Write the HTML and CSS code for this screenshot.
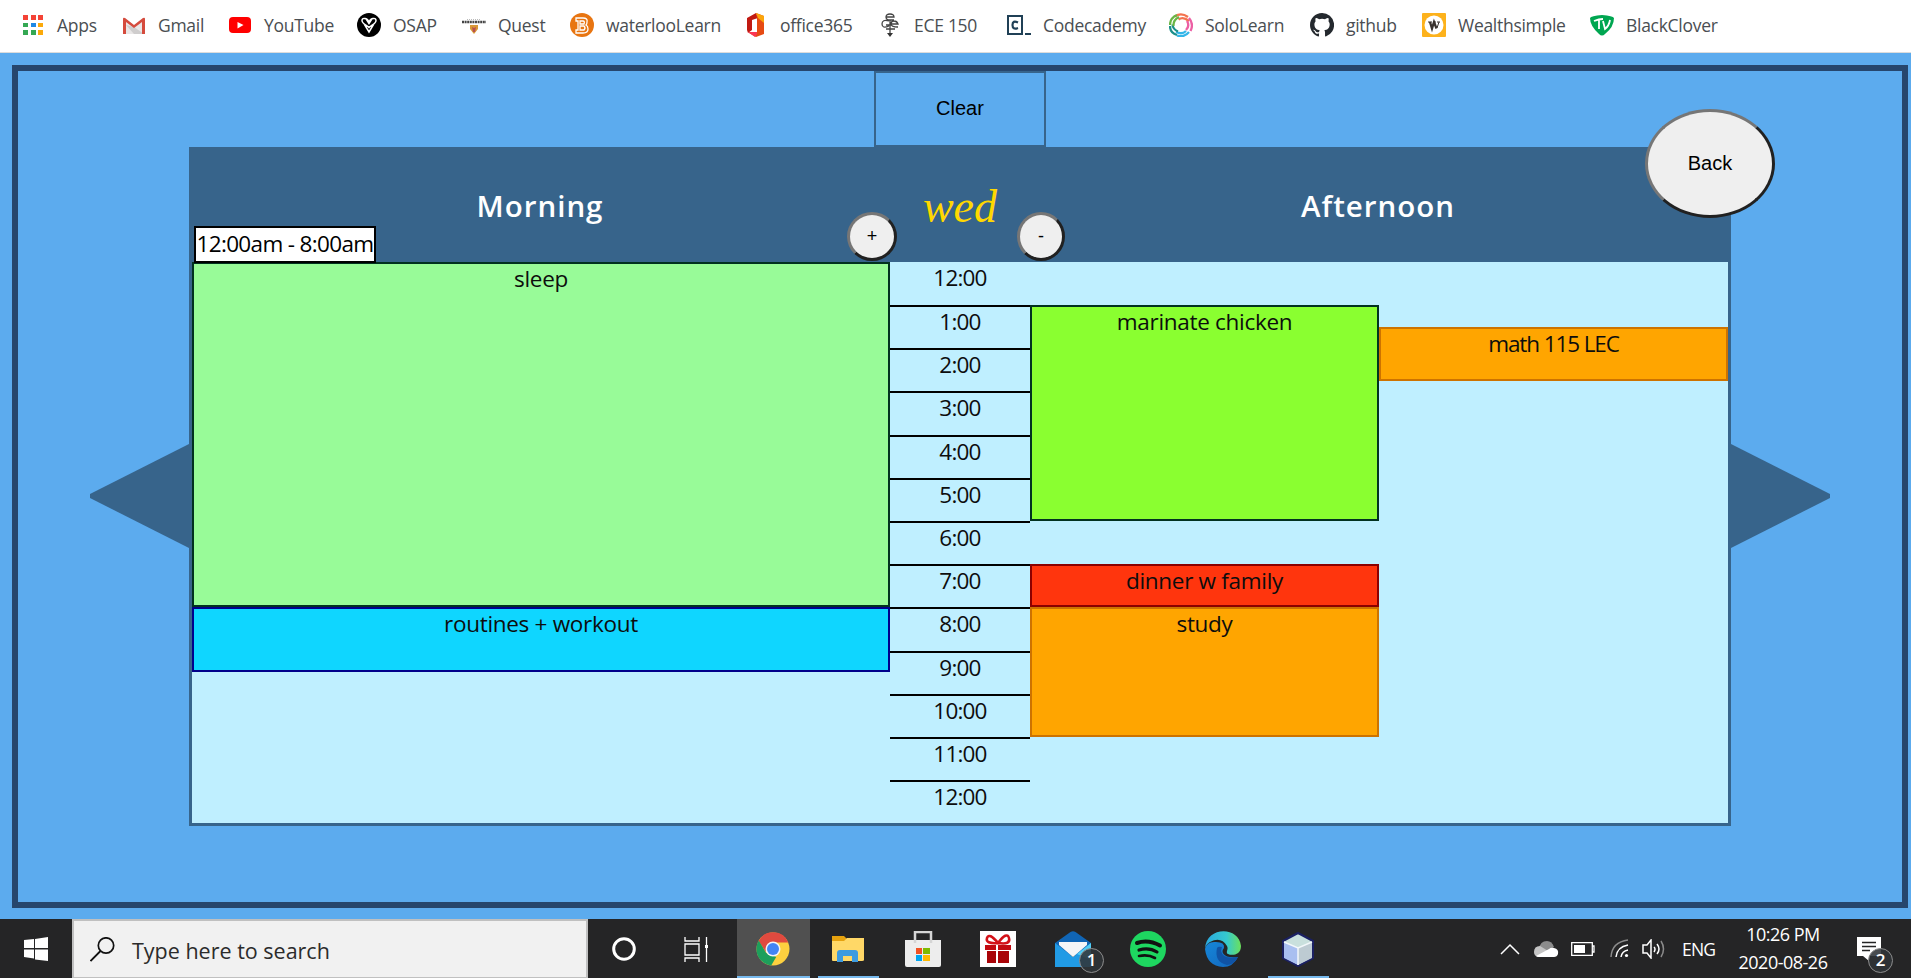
FILE: index.html
```html
<!DOCTYPE html>
<html lang="en">
<head>
<meta charset="utf-8">
<title>Day planner</title>
<link rel="stylesheet" href="styles.css">
</head>
<body>
<nav class="bookmarks">
  <a class="bm bm-apps"><svg viewBox="0 0 24 24"><path fill="#f44336" d="M2 2h5v5H2zM10 2h5v5h-5zM17 2h5v5h-5z"/><path fill="#34a853" d="M2 10h5v4H2zM2 17h5v5H2zM10 17h5v5h-5z"/><path fill="#1e88e5" d="M10 10h5v4h-5z"/><path fill="#fba90a" d="M17 10h5v4h-5zM17 17h5v5h-5z"/></svg><span>Apps</span></a>
  <a class="bm bm-gmail"><svg viewBox="0 0 24 24"><path fill="#e9e7e7" d="M1 5h22v16H1z"/><path fill="#cfcdcd" d="M12 14l10 7H12l-8-9z"/><path fill="#fff" d="M3 5h18l-9 7z"/><path fill="#d54b3d" d="M1 6q0-2 2-1l9 7 9-7q2-1 2 1v15h-3V9l-8 6-8-6v12H1z"/></svg><span>Gmail</span></a>
  <a class="bm bm-youtube"><svg viewBox="0 0 24 24"><rect x="1" y="4" width="22" height="16" rx="4" fill="#f00"/><path fill="#fff" d="M9.500 9l6 3-6 3.500z"/></svg><span>YouTube</span></a>
  <a class="bm bm-osap"><svg viewBox="0 0 24 24"><circle cx="12" cy="12" r="12"/><path fill="none" stroke="#fff" stroke-width="1.500" d="M12 9.500C11 5 5 4 5 7.500s5 4.500 7 7c2-2.500 7-3.500 7-7S13 5 12 9.500zM7.500 11.500L12 19l4.500-7.500M9.500 6.500l2.500 4 2.500-4"/></svg><span>OSAP</span></a>
  <a class="bm bm-quest"><svg viewBox="0 0 24 24"><path stroke="#bbb" stroke-width="1" stroke-dasharray="1 1" d="M5 6.500h14"/><path stroke="#444" stroke-width="2.600" stroke-dasharray="2 .6" d="M0 9h24"/><path fill="#d99736" d="M8 12h8v4l-4 5-4-5z"/><path fill="#b75050" d="M10 14l2 1 2-1-1 5h-2z"/></svg><span>Quest</span></a>
  <a class="bm bm-learn"><svg viewBox="0 0 24 24"><circle cx="12" cy="12" r="12" fill="#e87511"/><path fill="none" stroke="#fff" stroke-width="1.300" d="M6 5h7q5 0 4 4 0 2-1 3 2 1 2 4 0 4-5 4H6v-3h2V8H6zM10 8h3q2 0 1 3h-4zM10 13h4q2 2 0 4h-4z"/></svg><span>waterlooLearn</span></a>
  <a class="bm bm-office"><svg viewBox="0 0 24 24"><path fill="#c11a12" d="M3 5l9-5 2 5-6 2v10l-4 3-1-3z"/><path fill="#e64a13" d="M12 0l8 3v18l-8 3-7-4h8V5l-1-5z"/><path fill="#fba50b" d="M12 0l8 3v7l-6-5z"/><path fill="#fa3552" d="M4 19h9v2l-2 3z"/></svg><span>office365</span></a>
  <a class="bm bm-ece"><svg viewBox="0 0 24 24"><path fill="none" stroke="#444" stroke-width="1.300" d="M8 4h8q0-3-4-3T8 4t4 3h4M11 8q-7-2-7 3t7 2M13 11h7q-1-3-4-3t-3 3 7 3M8 16h9M12 7v15M8 12h5"/><path fill="#333" d="M9 20h6l-3 4z"/></svg><span>ECE 150</span></a>
  <a class="bm bm-code"><svg viewBox="0 0 24 24"><path fill="none" stroke="#204056" stroke-width="2" d="M1 3h14v18H1z"/><path fill="none" stroke="#204056" stroke-width="2.200" d="M11 9.500Q5.500 7 5.500 12t5.500 3"/><path stroke="#204056" stroke-width="2" d="M18 21h6"/></svg><span>Codecademy</span></a>
  <a class="bm bm-solo"><svg viewBox="0 0 24 24" fill="none" stroke-width="2.300"><path stroke="#f4734f" d="M6 3.500q6-4.500 13 .5M9.500 6.500Q14 3 20 8"/><path stroke="#ec5fa4" d="M20 5q5 6 1.500 13M18 8q3 5-1 9"/><path stroke="#34b5e8" d="M20 19q-5 6-12 3.500M17 18q-4 4-10 1"/><path stroke="#1b8f8a" d="M8 22q-7-2-7-9M9 18.500q-5-2-5.500-7"/><path stroke="#69b545" d="M1 12Q1 5 8 2M4.500 13q-.5-6 5.500-9"/></svg><span>SoloLearn</span></a>
  <a class="bm bm-github"><svg viewBox="0 0 16 16"><path fill="#24292e" d="M8 0C3.580 0 0 3.580 0 8c0 3.540 2.290 6.530 5.470 7.590.4.070.55-.17.55-.38v-1.490c-2.010.37-2.530-.49-2.690-.94-.09-.23-.48-.94-.82-1.130-.28-.15-.68-.52-.01-.53.63-.01 1.080.58 1.230.82.72 1.210 1.870.87 2.330.66.070-.52.280-.87.510-1.070-1.780-.2-3.640-.89-3.640-3.950 0-.87.310-1.590.82-2.150-.08-.2-.36-1.020.08-2.120 0 0 .67-.21 2.200.82a7.600 7.600 0 0 1 4 0c1.530-1.040 2.200-.82 2.200-.82.44 1.100.16 1.920.08 2.120.51.560.82 1.270.82 2.150 0 3.070-1.870 3.750-3.650 3.950.29.250.54.730.54 1.480v2.200c0 .21.150.46.550.38A8 8 0 0 0 8 0z"/></svg><span>github</span></a>
  <a class="bm bm-wealth"><svg viewBox="0 0 24 24"><rect width="24" height="24" rx="1" fill="#fdb21c"/><circle cx="12" cy="12" r="9.500" fill="#fff"/><path fill="none" stroke="#3a332f" stroke-width="2.300" d="M8 9l2 6.500L12 9l2.500 6.500"/><path fill="none" stroke="#3a332f" stroke-width="1" d="M6 9h4M11 9h3M15 9h3M15 15l2-6"/></svg><span>Wealthsimple</span></a>
  <a class="bm bm-tv"><svg viewBox="0 0 24 24"><path fill="#00a651" d="M0 5q1-2 12-3 11 1 12 3 0 9-9 16-3 3-6 0Q0 13 0 5z"/><path fill="none" stroke="#fff" stroke-width="1.800" d="M4 8q5-2 9-2M9 7v9M13 8l2 8q4-3 5-9"/></svg><span>BlackClover</span></a>
</nav>

<main class="page">
  <section class="frame">
    <button class="clear">Clear</button>
    <div class="stage">
      <svg class="arrow" viewBox="0 0 99 104"><path d="M99 0v104L0 54v-4z"/></svg>
      <div class="planner">
        <header class="head">
          <h2>Morning</h2>
          <div class="day">wed</div>
          <h2>Afternoon</h2>
          <span class="tip">12:00am - 8:00am</span>
          <button class="round plus">+</button>
          <button class="round minus">-</button>
          <button class="round back">Back</button>
        </header>
        <div class="body">
          <div class="col morning">
            <div class="event sleep">sleep</div>
            <div class="event workout">routines + workout</div>
          </div>
          <div class="hours">
            <div>12:00</div><div>1:00</div><div>2:00</div><div>3:00</div><div>4:00</div><div>5:00</div><div>6:00</div><div>7:00</div><div>8:00</div><div>9:00</div><div>10:00</div><div>11:00</div><div>12:00</div>
          </div>
          <div class="col half">
            <div class="event chicken">marinate chicken</div>
            <div class="event dinner">dinner w family</div>
            <div class="event study">study</div>
          </div>
          <div class="col half">
            <div class="event math">math 115 LEC</div>
          </div>
        </div>
      </div>
      <svg class="arrow" viewBox="0 0 99 104"><path d="M0 0v104L99 54v-4z"/></svg>
    </div>
  </section>
</main>

<footer class="taskbar">
  <div class="start"><svg width="24" height="24" viewBox="0 0 24 24"><path fill="#fff" d="M0 3l10-1v9H0zM11 2l13-2v11H11zM0 12.500h10v9L0 20zM11 12.500h13V24l-13-1.500z"/></svg></div>
  <div class="search"><svg width="25" height="25" viewBox="0 0 25 25"><circle cx="16" cy="8.500" r="7.700" fill="none" stroke="#111" stroke-width="1.700"/><path stroke="#111" stroke-width="1.800" d="M10.500 14L.5 24"/></svg><span>Type here to search</span></div>
  <div class="task"><svg width="26" height="26" viewBox="0 0 26 26"><circle cx="13" cy="13" r="10.300" fill="none" stroke="#fff" stroke-width="3"/></svg></div>
  <div class="task"><svg width="26" height="26" viewBox="0 0 26 26" fill="none" stroke="#fff" stroke-width="1.300"><path d="M2 1v4h14V1M2 8h14v11H2zM2 26v-4h14v4M23.500 1v25"/><path fill="#fff" stroke="none" d="M22 9h3v3h-3z"/></svg></div>
  <div class="task active"><svg width="34" height="34" viewBox="0 0 34 34"><circle cx="17" cy="17" r="16.500" fill="#fdd03f"/><path fill="#e04a3f" d="M2.500 9a16.500 16.500 0 0 1 29.800 1.500H17L10 20z"/><path fill="#1d9f5c" d="M2.700 8.500l7.500 12.500 10 4-5 8.400A16.500 16.500 0 0 1 2.700 8.500z"/><circle cx="17" cy="17" r="7.500" fill="#f3f4f7"/><circle cx="17" cy="17" r="6" fill="#4285f4"/></svg></div>
  <div class="task open"><svg width="34" height="34" viewBox="0 0 34 34"><path fill="#e6a20e" d="M1 4h12l3 3v6H1z"/><path fill="#ffd867" d="M1 9h12l3-3h17v22q0 1-2 1H2q-1 0-1-1z"/><path fill="#3d9be0" d="M6 30V21q0-3 3-3h15q3 0 3 3v9h-6v-6h-9v6z"/></svg></div>
  <div class="task"><svg width="36" height="36" viewBox="0 0 36 36"><path fill="none" stroke="#d5d5d5" stroke-width="2.500" d="M10 10V1h16v9"/><path fill="#ededed" d="M0 9h36v25q0 2-2 2H2q-2 0-2-2z"/><path stroke="#d5d5d5" stroke-width="2.500" d="M10 9v3M26 9v3"/><path fill="#f25022" d="M11 17h6v6h-6z"/><path fill="#7fba00" d="M18 17h7v6h-7z"/><path fill="#00a4ef" d="M11 24h6v6h-6z"/><path fill="#ffb900" d="M18 24h7v6h-7z"/></svg></div>
  <div class="task"><svg width="36" height="36" viewBox="0 0 36 36"><path fill="#fff" d="M0 0h36v36H0z"/><path fill="none" stroke="#d31118" stroke-width="2.500" d="M18 12Q5 13 7 7t11 5Q27 0 29 7t-11 5z"/><path fill="#c20a10" d="M5 14h11v5H5zM18 14h13v5H18z"/><path fill="#a90408" d="M7 20h9v12H7zM18 20h11v12H18z"/></svg></div>
  <div class="task"><svg width="36" height="36" viewBox="0 0 36 36"><path fill="#1065b5" d="M0 12L15.500 1q2.500-1.500 5 0L36 12v12H0z"/><path fill="#219be5" d="M0 12l18 14L36 12v24H0z"/><path fill="#f5f5f7" d="M4 11h28v3L18 26 4 14z"/><path fill="#51cdf4" d="M36 12v17L22 23z"/></svg><span class="badge">1</span></div>
  <div class="task"><svg width="36" height="36" viewBox="0 0 36 36"><circle cx="18" cy="18" r="18" fill="#1ed760"/><path fill="none" stroke="#111" stroke-linecap="round" d="M7 12q11-4 23 2.500" stroke-width="4"/><path fill="none" stroke="#111" stroke-linecap="round" stroke-width="3.200" d="M9 19q10-3 18 2"/><path fill="none" stroke="#111" stroke-linecap="round" stroke-width="2.600" d="M9 25q9-2 16 2"/></svg></div>
  <div class="task"><svg width="36" height="36" viewBox="0 0 36 36"><defs><linearGradient id="eg" x1="0" x2="1"><stop offset="0" stop-color="#2aa9e0"/><stop offset=".6" stop-color="#35c9cf"/><stop offset="1" stop-color="#6be05b"/></linearGradient><linearGradient id="eb" x2="1" y2="1"><stop offset="0" stop-color="#1687d9"/><stop offset="1" stop-color="#1266bd"/></linearGradient></defs><path fill="url(#eb)" d="M0 18Q2 10 11 11q9 0 8 6c-4 4 0 11 14 9Q28 36 18 36 2 35 0 18z"/><path fill="url(#eg)" d="M0 18C1-5 34-5 36 15c0 9-9 10-13 8-3-2 1-4-1-8Q16 5 5 11q-4 2-5 7z"/><path fill="#1053a5" d="M12 17q-3 14 10 17 8-1 11-8-15 3-17-6l1-4q-4-1-5 1z"/></svg></div>
  <div class="task open"><svg width="34" height="36" viewBox="0 0 34 36"><path fill="#c9e0dd" stroke="#1b2062" stroke-width="2" stroke-linejoin="round" d="M17 2l15 8v17l-15 8-15-8V10z"/><path fill="#a9bff0" d="M3 11l14 6v17L3 27z"/><path fill="#bdcbd2" d="M31 11l-14 6v17l14-7z"/><path stroke="#f2f7fa" stroke-width="1.500" fill="none" d="M3 11l14 6 14-6M17 17v17"/></svg></div>
  <div class="tray">
    <svg class="t-up" width="20" height="12" viewBox="0 0 20 12"><path fill="none" stroke="#fff" stroke-width="1.500" d="M1 11l9-9 9 9"/></svg>
    <svg class="t-cloud" width="26" height="18" viewBox="0 0 26 18"><path fill="#8c8c8c" d="M6 9q1-8 8-8 5 0 7 6l-8 5z"/><path fill="#c4c4c4" d="M1 12q0-6 6-6l13 8-15 3q-4-1-4-5z"/><path fill="#fff" d="M3 16l13-7q2-2 5-1 5 1 4 6-1 3-4 3H6q-2 0-3-1z"/></svg>
    <svg class="t-bat" width="24" height="14" viewBox="0 0 24 14"><path fill="none" stroke="#fff" stroke-width="1.300" d="M.7.7h20.600v12.600H.7zM21 4h2v6h-2"/><path fill="#fff" d="M3 3h11v8H3z"/></svg>
    <svg class="t-wifi" width="20" height="20" viewBox="0 0 20 20" fill="none" stroke="#fff" stroke-width="1.500"><path stroke="#8b8b8b" d="M1 18Q2 3 18 1"/><path d="M6 18Q7 8 18 6M11 18q1-6 7-7"/><circle cx="16.500" cy="16.500" r="1.600" fill="#fff" stroke="none"/></svg>
    <svg class="t-vol" width="24" height="20" viewBox="0 0 24 20" fill="none" stroke="#fff" stroke-width="1.500"><path d="M1 6h4l4-5v18l-4-5H1zM12 8q2 2 0 5M15 5q4 5 0 10"/><path stroke="#8b8b8b" d="M19 2q5 8 0 16"/></svg>
    <span class="lang">ENG</span>
    <div class="clock"><span>10:26 PM</span><span class="date">2020-08-26</span></div>
    <div class="notes"><svg width="24" height="24" viewBox="0 0 24 24"><path fill="#fff" d="M0 0h24v19H12v5l-6-5H0z"/><path stroke="#252525" stroke-width="1.500" d="M5 5.500h14M5 9.500h14M5 13.500h8"/></svg><span class="badge">2</span></div>
  </div>
</footer>
</body>
</html>
```
FILE: styles.css
```css
* { box-sizing: border-box; }
body {
  margin: 0;
  height: 978px;
  overflow: hidden;
  display: flex;
  flex-direction: column;
  background: #5cabee;
  font-family: "Open Sans", sans-serif;
}
button { font: 20px "Liberation Sans", Arial, sans-serif; color: #000; padding: 0; }

/* Bookmarks bar */
.bookmarks {
  height: 53px;
  flex: none;
  display: flex;
  align-items: center;
  padding: 0 0 3px 21px;
  background: #fff;
  border-bottom: 1px solid #dcdcdc;
}
.bm { display: flex; align-items: center; gap: 12px; flex: none; white-space: nowrap; color: #4a4e52; font-size: 17.5px; letter-spacing: -0.28px; }
.bm svg { width: 24px; height: 24px; flex: none; }
.bm-apps { width: 101px; }
.bm-gmail { width: 106px; }
.bm-youtube { width: 129px; }
.bm-osap { width: 105px; }
.bm-quest { width: 108px; }
.bm-learn { width: 174px; }
.bm-office { width: 134px; }
.bm-ece { width: 129px; }
.bm-code { width: 162px; }
.bm-solo { width: 141px; }
.bm-github { width: 112px; }
.bm-wealth { width: 168px; }

/* Page */
.page { height: 866px; flex: none; padding: 12px 3px 11px 12px; }
.frame {
  height: 843px;
  border: 6px solid #26466d;
  display: flex;
  flex-direction: column;
  align-items: center;
}
.clear { width: 172px; height: 76px; flex: none; border: 2px solid #37648b; background: #5cabee; padding-bottom: 2px; }
.stage { display: flex; align-items: center; }
.arrow { width: 99px; height: 104px; fill: #37648b; margin-top: 18px; }
.planner { width: 1542px; height: 679px; border: 3px solid #37648b; border-top: 0; background: #bfefff; }

.head {
  position: relative;
  height: 115px;
  margin: 0 -3px;
  padding: 0 3px;
  background: #37648b;
  display: grid;
  grid-template-columns: 698px 140px 698px;
  text-align: center;
}
.head h2 { margin: 39px 2px 0 0; font-size: 29.5px; line-height: 40px; font-weight: 600; letter-spacing: 1px; color: #fff; }
.day { color: #ffd800; font: italic 46px/50px "Liberation Serif", serif; padding-top: 35px; }
.tip {
  position: absolute;
  left: 5px;
  top: 79px;
  width: 182px;
  height: 37px;
  border: 2px solid #000;
  background: #fff;
  font-size: 22.5px;
  line-height: 32px;
  letter-spacing: -0.65px;
  white-space: nowrap;
}
.round { position: absolute; border: 3px solid; border-color: #767676 #212121 #212121 #767676; border-radius: 50%; background: #efefef; }
.plus { left: 658px; top: 65px; width: 50px; height: 49px; font-size: 18px; }
.minus { left: 828px; top: 65px; width: 48px; height: 49px; font-size: 18px; }
.back { left: 1456px; top: -38px; width: 130px; height: 109px; }

.body { height: 561px; display: grid; grid-template-columns: 698px 140px 349px 349px; font-size: 22.5px; text-align: center; color: #0d0d0d; }
.hours div { height: 43.19px; border-top: 2px solid #000; line-height: 30px; letter-spacing: -0.8px; }
.hours div:first-child { height: 43.09px; border-top-color: transparent; line-height: 28px; }
.event { border: 2px solid; line-height: 30px; letter-spacing: -0.3px; }
.sleep { height: 345px; background: #98fb98; border-color: #013220; }
.workout { height: 65px; background: #0fd6ff; border-color: #00008b; }
.chicken { margin-top: 43px; height: 216px; background: #8aff30; border-color: #013220; }
.dinner { margin-top: 43px; height: 43px; background: #ff350d; border-color: #8b0000; }
.study { height: 130px; background: #ffa500; border-color: #cd7300; }
.math { margin-top: 65px; height: 54px; background: #ffa500; border-color: #cd7300; letter-spacing: -1.1px; }

/* Taskbar */
.taskbar { height: 59px; flex: none; display: flex; background: #252526; color: #fff; }
.start { width: 72px; padding: 18px 0 0 24px; }
.search {
  width: 516px;
  border: 2px solid #c0c0c0;
  border-bottom-width: 1px;
  background: #f1f1f1;
  color: #2b2b2b;
  display: flex;
  padding: 16px 0 0 16px;
  gap: 17px;
  font-size: 21.5px;
  line-height: 27px;
  letter-spacing: 0;
}
.task { position: relative; width: 73px; height: 59px; margin-right: 2px; display: flex; align-items: center; justify-content: center; }
.task:nth-child(3) { width: 72px; margin-right: 0; }
.task:nth-child(4) { width: 77px; margin-right: 0; padding-right: 5px; }
.task svg { margin-top: 1px; }
.task:nth-child(n+5) svg { margin: 0 2px 0 0; }
.active { background: #505050; }
.active::after, .open::after { content: ""; position: absolute; bottom: 0; left: 6px; right: 6px; height: 2px; background: #76b9ed; }
.active::after { left: 0; right: 0; }
.badge {
  position: absolute;
  left: 42px;
  top: 29px;
  width: 25px;
  height: 25px;
  border: 1.5px solid #8d8d8d;
  border-radius: 50%;
  background: rgba(48, 52, 56, .88);
  font-size: 17px;
  font-weight: 600;
  line-height: 22px;
  text-align: center;
}
.tray { margin-left: auto; width: 412px; display: flex; align-items: center; }
.tray > svg { flex: none; }
.t-up { margin-left: 1px; }
.t-cloud { margin-left: 13px; }
.t-bat { margin-left: 12px; }
.t-wifi { margin-left: 15px; }
.t-vol { margin-left: 12px; }
.lang { margin-left: 16px; width: 36px; font-size: 17.5px; letter-spacing: -0.8px; }
.clock { width: 100px; margin-left: 15px; display: flex; flex-direction: column; text-align: center; font-size: 18px; line-height: 28px; letter-spacing: -0.5px; padding-bottom: 1px; }
.notes { position: relative; margin-left: 24px; height: 59px; padding-top: 18px; }
.notes .badge { left: 11px; }
```
